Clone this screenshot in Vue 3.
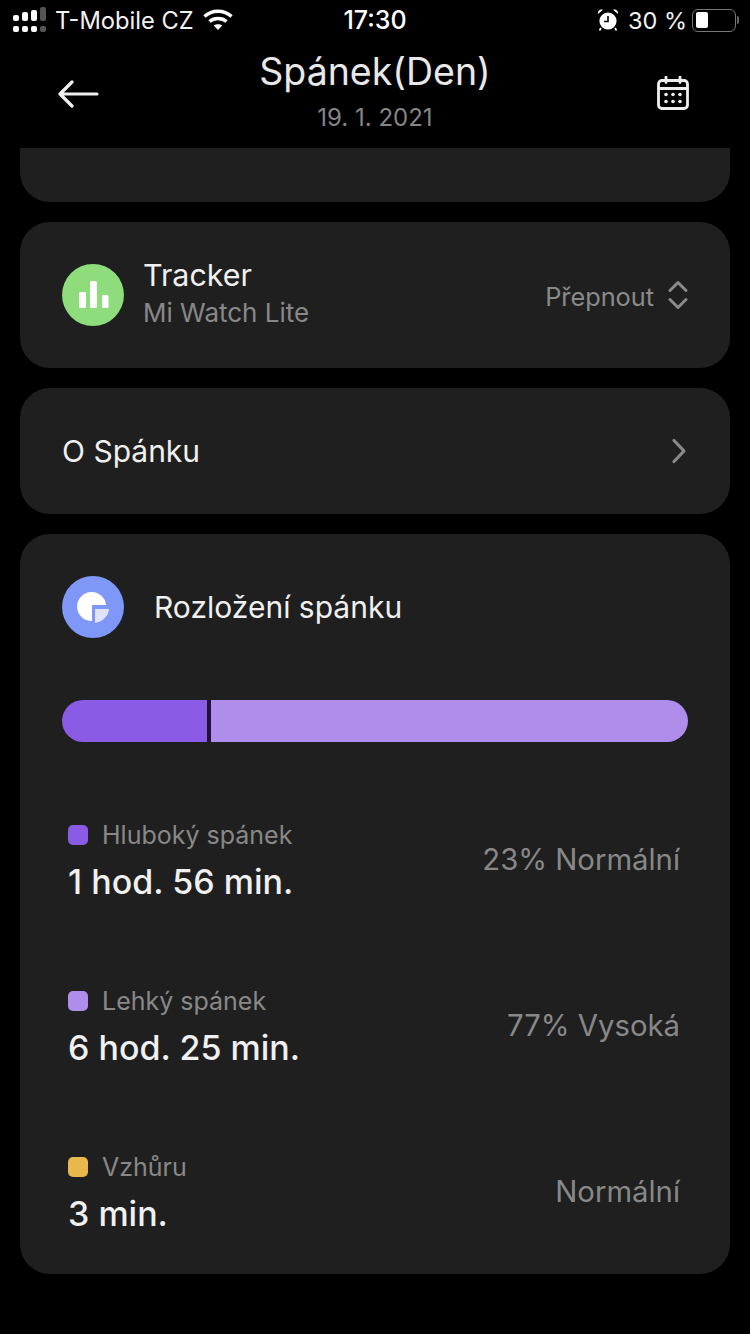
<script setup>
const rows = [
  { name: 'Hluboký spánek', value: '1 hod. 56 min.', note: '23% Normální', color: '#8a5ce6' },
  { name: 'Lehký spánek', value: '6 hod. 25 min.', note: '77% Vysoká', color: '#ae8deb' },
  { name: 'Vzhůru', value: '3 min.', note: 'Normální', color: '#e8b84a' },
]
</script>

<template>
  <div class="page">
    <div class="status">
      <div class="status-left">
        <svg class="signal" width="34" height="34" viewBox="0 0 34 34">
          <rect x="1" y="12" width="6" height="6" rx="2" fill="#fff" />
          <rect x="1" y="23" width="6" height="6" rx="2" fill="#fff" />
          <rect x="10" y="9" width="6" height="9" rx="2" fill="#fff" />
          <rect x="10" y="23" width="6" height="6" rx="2" fill="#fff" />
          <rect x="19" y="7" width="6" height="11" rx="2" fill="#fff" />
          <rect x="19" y="23" width="6" height="6" rx="2" fill="#fff" />
          <rect x="28" y="4" width="6" height="14" rx="2" fill="#555" />
          <rect x="28" y="23" width="6" height="6" rx="2" fill="#555" />
        </svg>
        <span class="carrier">T-Mobile CZ</span>
        <svg class="wifi" width="30" height="24" viewBox="0 0 30 24" fill="none" stroke="#fff" stroke-width="3.4">
          <path d="M1.5 8.5 C9 1.5 21 1.5 28.5 8.5" />
          <path d="M6.5 13.5 C11 9.5 19 9.5 23.5 13.5" />
          <path d="M15 22 L10.8 17.6 C13 15.8 17 15.8 19.2 17.6 Z" fill="#fff" stroke="none" />
        </svg>
      </div>
      <span class="clock">17:30</span>
      <div class="status-right">
        <svg width="22" height="24" viewBox="0 0 22 24">
          <circle cx="11" cy="13" r="8.6" fill="#fff" />
          <path d="M11 8 V13.5 H7" fill="none" stroke="#000" stroke-width="1.6" />
          <path d="M1 6 L6 1.8 C3 0.8 0.4 3 1 6 Z M21 6 L16 1.8 C19 0.8 21.6 3 21 6 Z" fill="#fff" />
          <path d="M4 20 L2.5 22.5 M18 20 L19.5 22.5" stroke="#fff" stroke-width="1.6" />
        </svg>
        <span class="pct">30 %</span>
        <div class="battery"><div class="battery-fill"></div></div>
        <div class="battery-tip"></div>
      </div>
    </div>

    <header class="head">
      <svg class="back" width="42" height="30" viewBox="0 0 42 30" fill="none" stroke="#eee" stroke-width="3.2" stroke-linecap="round" stroke-linejoin="round">
        <path d="M39 15 H2 M14 3 L2 15 L14 27" />
      </svg>
      <div class="head-title">
        <div class="title">Spánek(Den)</div>
        <div class="date">19. 1. 2021</div>
      </div>
      <svg class="cal" width="32" height="34" viewBox="0 0 32 34" fill="none" stroke="#eee" stroke-width="2.8" stroke-linejoin="round">
        <rect x="1.5" y="4.5" width="29" height="28" rx="3.5" />
        <path d="M1.5 12.5 H30.5 M9 1 V6.5 M23 1 V6.5" stroke-linecap="round" />
        <g fill="#eee" stroke="none">
          <circle cx="9" cy="18.5" r="1.8" /><circle cx="16" cy="18.5" r="1.8" /><circle cx="23" cy="18.5" r="1.8" />
          <circle cx="9" cy="25.5" r="1.8" /><circle cx="16" cy="25.5" r="1.8" /><circle cx="23" cy="25.5" r="1.8" />
        </g>
      </svg>
    </header>

    <main class="content">
      <section class="card stub"></section>

      <section class="card tracker">
        <div class="tracker-icon">
          <svg width="32" height="30" viewBox="0 0 32 30" fill="#fff">
            <rect x="2" y="12" width="7" height="16" rx="1.5" />
            <rect x="13" y="1" width="7" height="27" rx="1.5" />
            <rect x="25" y="15" width="6.5" height="13" rx="1.5" />
          </svg>
        </div>
        <div class="tracker-text">
          <div class="tracker-name">Tracker</div>
          <div class="tracker-sub">Mi Watch Lite</div>
        </div>
        <div class="switch">
          <span>Přepnout</span>
          <svg width="20" height="30" viewBox="0 0 20 30" fill="none" stroke="#8a8a8a" stroke-width="3" stroke-linecap="round" stroke-linejoin="round">
            <path d="M2 10.5 L10 2.5 L18 10.5 M2 19.5 L10 27.5 L18 19.5" />
          </svg>
        </div>
      </section>

      <section class="card about">
        <span>O Spánku</span>
        <svg width="16" height="26" viewBox="0 0 16 26" fill="none" stroke="#8a8a8a" stroke-width="3.2" stroke-linecap="round" stroke-linejoin="round">
          <path d="M3 2.5 L13 13 L3 23.5" />
        </svg>
      </section>

      <section class="card dist">
        <div class="dist-head">
          <div class="dist-icon">
            <svg width="34" height="34" viewBox="0 0 34 34">
              <path d="M16 31 A14.5 14.5 0 1 1 30 15 H16 Z" fill="#fff" />
              <path d="M19 19 H33 C32.5 26 27 31.5 19 33 Z" fill="#dfe3fb" />
            </svg>
          </div>
          <span class="dist-title">Rozložení spánku</span>
        </div>

        <div class="bar">
          <div class="bar-deep"></div>
          <div class="bar-light"></div>
        </div>

        <div class="rows">
          <div v-for="row in rows" :key="row.name" class="row">
            <div class="row-main">
              <div class="row-label">
                <i class="dot" :style="{ background: row.color }"></i>
                <span>{{ row.name }}</span>
              </div>
              <div class="row-value">{{ row.value }}</div>
            </div>
            <div class="row-note">{{ row.note }}</div>
          </div>
        </div>
      </section>
    </main>
  </div>
</template>

<style>
html, body { margin: 0; background: #000; }
</style>

<style scoped>
.page {
  width: 750px;
  height: 1334px;
  overflow: hidden;
  background: #000;
  font-family: Inter, "Noto Sans", sans-serif;
  color: #eee;
}
.status {
  height: 40px;
  position: relative;
  display: flex;
  align-items: center;
  justify-content: space-between;
  padding: 0 11px 0 12px;
  color: #fff;
  font-size: 24px;
}
.status-left, .status-right { display: flex; align-items: center; }
.signal { margin-right: 9px; }
.carrier { color: #f2f2f2; font-size: 23.7px; }
.wifi { margin-left: 9px; }
.clock {
  position: absolute;
  left: 0;
  right: 0;
  text-align: center;
  font-size: 25px;
  font-weight: 500;
}
.pct { margin-left: 9px; color: #f2f2f2; font-size: 23.5px; }
.battery {
  width: 44px;
  height: 23px;
  box-sizing: border-box;
  margin-left: 5px;
  border: 1.5px solid #777;
  border-radius: 6px;
  padding: 2.5px;
}
.battery-fill { width: 12px; height: 100%; background: #fff; border-radius: 2px; }
.battery-tip { width: 2px; height: 8px; margin-left: 1px; background: #666; border-radius: 0 2px 2px 0; }

.head {
  height: 108px;
  display: grid;
  grid-template-columns: 1fr auto 1fr;
  align-items: start;
  padding: 0 58px;
}
.back { margin-top: 39px; }
.head-title { text-align: center; }
.title { font-size: 37.5px; line-height: 46px; margin-top: 9px; color: #e8e8e8; }
.date { font-size: 24px; line-height: 30px; margin-top: 8px; color: #858585; }
.cal { margin-top: 36px; margin-right: 3px; justify-self: end; }

.content {
  display: flex;
  flex-direction: column;
  gap: 20px;
  padding: 0 20px;
}
.card { background: #1f1f1f; border-radius: 30px; }
.stub { height: 54px; border-radius: 0 0 30px 30px; }
.tracker {
  height: 146px;
  display: flex;
  align-items: center;
  padding: 0 42px;
  box-sizing: border-box;
}
.tracker-icon {
  width: 62px;
  height: 62px;
  border-radius: 50%;
  background: #8edc7c;
  display: flex;
  align-items: center;
  justify-content: center;
}
.tracker-text { margin-left: 19px; flex: 1; padding-bottom: 4px; }
.tracker-name { font-size: 30.4px; line-height: 36px; color: #f0f0f0; }
.tracker-sub { font-size: 26px; line-height: 32px; margin-top: 4px; color: #888; }
.switch { display: flex; align-items: center; gap: 14px; font-size: 25.3px; color: #8a8a8a; }
.switch span { padding-top: 2px; }
.about {
  height: 126px;
  display: flex;
  align-items: center;
  justify-content: space-between;
  padding: 0 43px 0 42px;
  box-sizing: border-box;
  font-size: 30px;
  color: #f0f0f0;
}
.dist { height: 740px; padding: 42px 42px 0; box-sizing: border-box; }
.dist-head { display: flex; align-items: center; }
.dist-icon {
  width: 62px;
  height: 62px;
  border-radius: 50%;
  background: #7f97f6;
  display: flex;
  align-items: center;
  justify-content: center;
}
.dist-title { margin-left: 30px; font-size: 30px; color: #f0f0f0; }
.bar {
  display: flex;
  height: 42px;
  margin-top: 62px;
  border-radius: 21px;
  overflow: hidden;
  gap: 4px;
  background: #1f1438;
}
.bar-deep { width: 145px; background: #8a5ce6; }
.bar-light { flex: 1; background: #ae8deb; }
.rows { margin-top: 76px; display: flex; flex-direction: column; gap: 56px; padding: 0 8px 0 6px; }
.row { height: 110px; display: flex; align-items: flex-start; justify-content: space-between; }
.row-label { display: flex; align-items: center; font-size: 25px; line-height: 34px; color: #888; }
.dot { width: 20px; height: 20px; border-radius: 5px; margin-right: 14px; }
.row-value { font-size: 34px; font-weight: 500; line-height: 40px; margin-top: 10px; color: #f0f0f0; }
.row-note { font-size: 29.3px; line-height: 36px; margin-top: 24px; color: #888; }
</style>
